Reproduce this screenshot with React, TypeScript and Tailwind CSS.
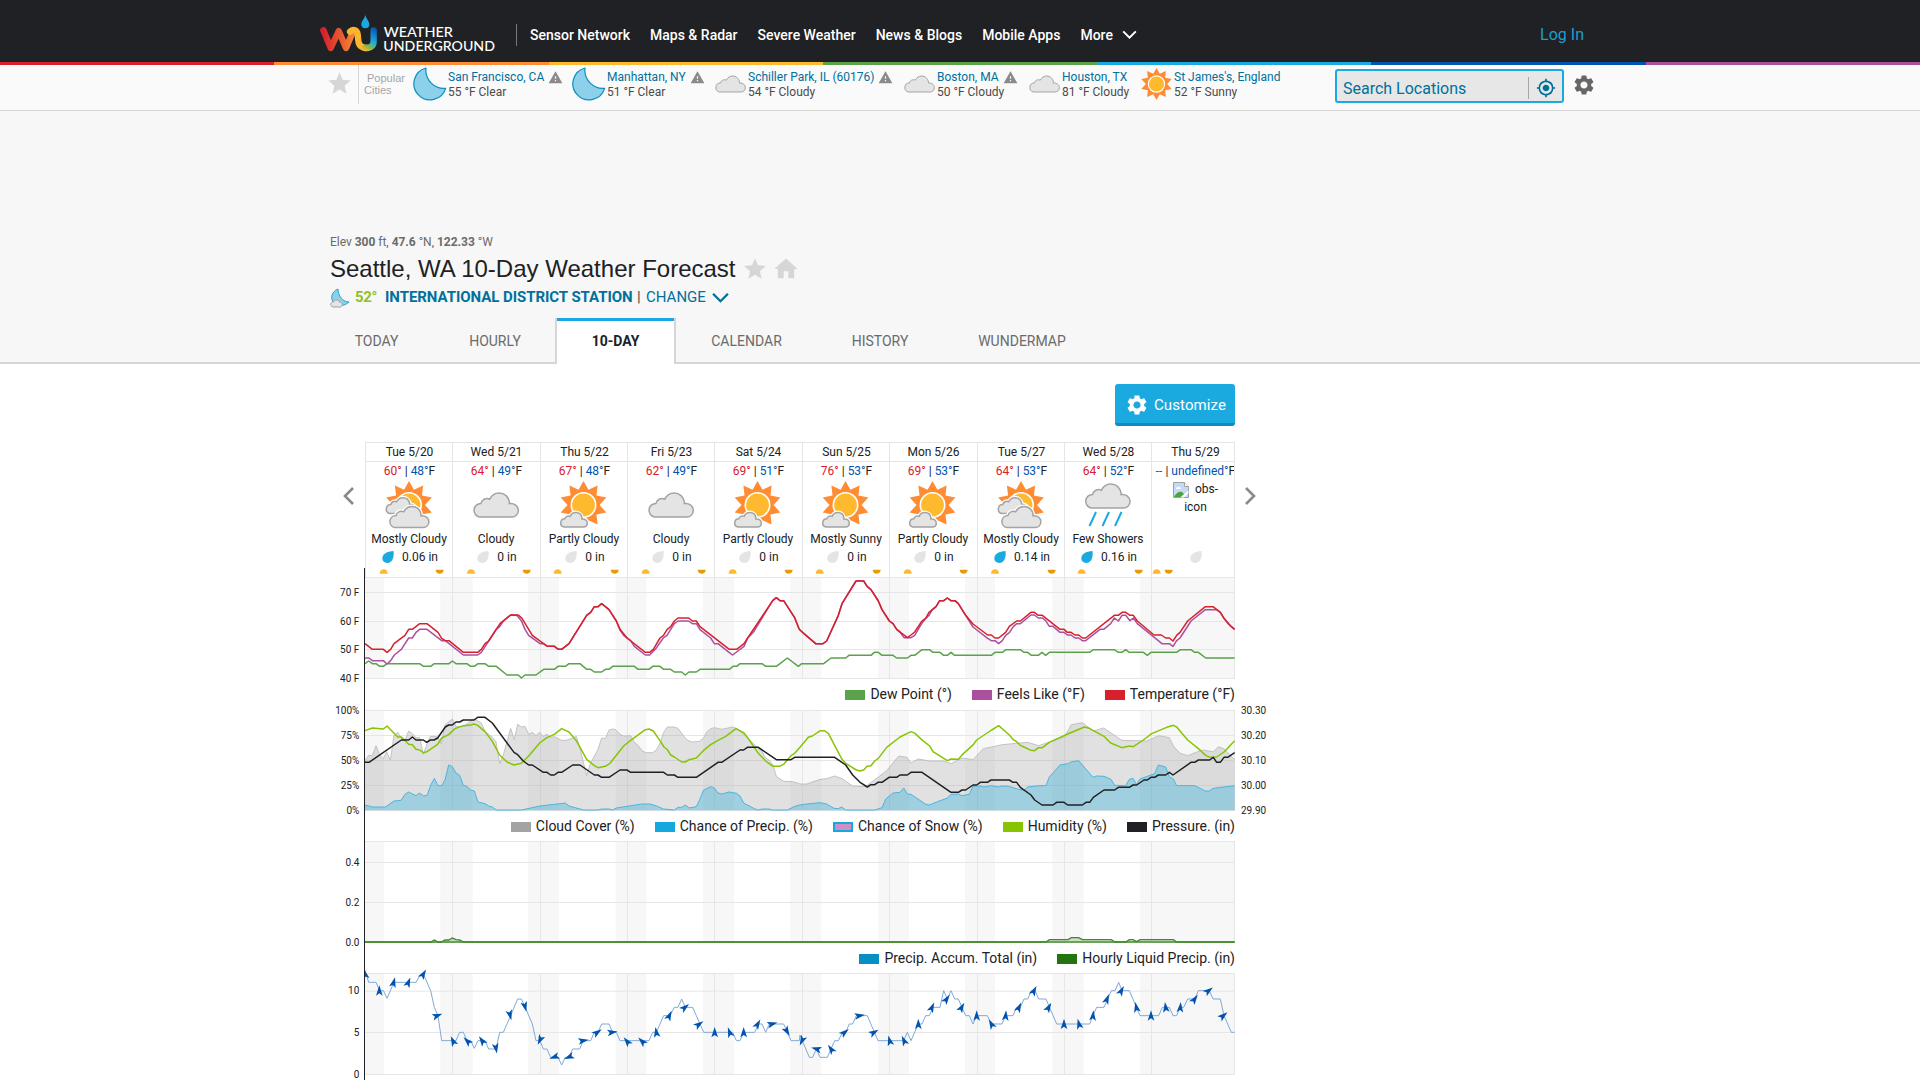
import type { ReactNode } from "react";
import { MdHome, MdMyLocation, MdSettings, MdStar, MdWarning } from "react-icons/md";

/* ---------- icons ---------- */

const CLOUD =
  "M8 25A6.9 6.9 0 0 1 9.6 11.4C10.4 7.6 14.6 5.6 18.4 7.2C20.4 3.2 24 1 27.8 1C33.2 1 37.4 4.8 38.2 10.4L38 11.6C43 11 47 14 47 18.4C47 22.4 44 25 40.4 25Z";

const STAR = Array.from({ length: 20 }, (_, i) => {
  const r = i % 2 ? 16 : 24;
  const a = (i * Math.PI) / 10;
  return `${(r * Math.sin(a)).toFixed(2)},${(-r * Math.cos(a)).toFixed(2)}`;
}).join(" ");

function SunShape({ x = 24, y = 24, s = 1 }: { x?: number; y?: number; s?: number }) {
  return (
    <g transform={`translate(${x} ${y}) scale(${s})`}>
      <polygon points={STAR} fill="#ff8b33" />
      <circle r="13" fill="#fff" />
      <circle r="11.4" fill="#ffb92f" />
    </g>
  );
}

function CloudShape({ x = 0, y = 0, s = 1, halo = false }: { x?: number; y?: number; s?: number; halo?: boolean }) {
  return (
    <g transform={`translate(${x} ${y}) scale(${s})`}>
      {halo && <path d={CLOUD} fill="#fff" stroke="#fff" strokeWidth={4 / s} />}
      <path d={CLOUD} fill="#e4e4e4" stroke="#a3a3a3" strokeWidth={1.5 / s} />
    </g>
  );
}

function MoonShape() {
  return (
    <path
      d="M13 1A16.2 16.2 0 1 0 32.6 21.3C22 22.5 11.5 13 13 1Z"
      fill="#8dd0ea"
      stroke="#0890c1"
      strokeWidth="1.2"
      strokeLinejoin="round"
    />
  );
}

type Sky = "clear" | "cloudy" | "sunny" | "partly" | "mostly" | "rain";

function SkyIcon({ sky, className }: { sky: Sky; className: string }) {
  return (
    <svg viewBox="0 0 48 48" className={`overflow-visible ${className}`}>
      {sky === "sunny" && <SunShape />}
      {sky === "cloudy" && <CloudShape x={-0.7} y={11} />}
      {sky === "partly" && (
        <>
          <SunShape x={23.5} y={24} />
          <CloudShape x={-0.9} y={31} s={0.6} halo />
        </>
      )}
      {sky === "mostly" && (
        <>
          <SunShape x={24} y={24} />
          <CloudShape x={-0.5} y={16} s={0.66} halo />
          <CloudShape x={2.5} y={24.5} s={0.88} halo />
        </>
      )}
      {sky === "rain" && (
        <>
          <CloudShape x={-1} y={2} />
          <path d="M12 31L5.500 45M25 31L18.500 45M37.500 31L31 45" stroke="#1baadf" strokeWidth="2" />
        </>
      )}
    </svg>
  );
}

function Chevron({ className }: { className: string }) {
  return (
    <svg viewBox="0 0 16 10" className={className} fill="none" stroke="currentColor" strokeWidth="2.2">
      <path d="M1 1.500L8 8.500L15 1.500" />
    </svg>
  );
}

function Side({ dir }: { dir: "left" | "right" }) {
  return (
    <svg viewBox="0 0 12 18" className="h-[18px] w-3" fill="none" stroke="#8a8a8a" strokeWidth="2.6">
      <path d={dir === "left" ? "M10 1L2 9L10 17" : "M2 1L10 9L2 17"} />
    </svg>
  );
}

function Leaf({ wet }: { wet: boolean }) {
  return (
    <svg viewBox="0 0 12 12" className="h-3 w-3">
      <path
        d="M11.500 0C12.400 6 10.500 12 5.200 12C2 12 0.300 10 0.300 7.300C0.300 3 5 0.300 11.500 0Z"
        fill={wet ? "#1baadf" : "#e4e4e4"}
      />
    </svg>
  );
}

function Logo() {
  return (
    <svg viewBox="30 42 530 116" className="h-[38.667px] w-[176.667px]">
      <defs>
        <linearGradient id="w" gradientUnits="userSpaceOnUse" x1="40" y1="0" x2="130" y2="0">
          <stop offset="0" stopColor="#d8202c" />
          <stop offset="1" stopColor="#f58434" />
        </linearGradient>
        <linearGradient id="u" gradientUnits="userSpaceOnUse" x1="192" y1="85" x2="158" y2="150">
          <stop offset="0" stopColor="#0b56b3" />
          <stop offset="0.5" stopColor="#1baadf" />
          <stop offset="0.78" stopColor="#7fb948" />
          <stop offset="1" stopColor="#ffb92f" />
        </linearGradient>
      </defs>
      <g fill="none" strokeWidth="19" strokeLinecap="round" strokeLinejoin="round">
        <path d="M40 91L62 144L86 93L108 144L128 97" stroke="url(#w)" />
        <path d="M120 95C129 85 142 90 143 104L145 122C146 138 157 144 172 144" stroke="#fdb52e" />
        <path d="M166 144C184 144 191 136 191 124L191 91" stroke="url(#u)" />
      </g>
      <path d="M166 44C168 56 178 63 178 73A12 12 0 0 1 154 73C154 63 164 56 166 44Z" fill="#1baadf" />
      <g fill="#fff" fontFamily="Lato, sans-serif" fontSize="39" fontWeight="500">
        <text x="221" y="110" textLength="208" lengthAdjust="spacingAndGlyphs">WEATHER</text>
        <text x="220" y="152.500" textLength="335" lengthAdjust="spacingAndGlyphs">UNDERGROUND</text>
      </g>
    </svg>
  );
}

/* ---------- header ---------- */

const NAV = ["Sensor Network", "Maps & Radar", "Severe Weather", "News & Blogs", "Mobile Apps"];

function Header() {
  return (
    <header>
      <div className="flex h-[62px] items-center bg-[#202124] pl-[320px]">
        <div className="mt-1 flex w-[196px]">
          <Logo />
        </div>
        <div className="mt-2 h-[22px] w-px bg-[#77787a]" />
        <nav className="mt-[7px] ml-[13px] flex flex-1 items-center gap-5 text-sm font-medium whitespace-nowrap text-white">
          {NAV.map((n) => (
            <a key={n}>{n}</a>
          ))}
          <a className="flex items-center gap-[9px]">
            More <Chevron className="h-[9px] w-[15px]" />
          </a>
        </nav>
        <a className="mt-[8px] mr-[336px] text-base text-[#1a9fd0]">Log In</a>
      </div>
      <div className="grid h-[3px] grid-cols-7">
        <i className="bg-[#d8202c]" />
        <i className="bg-[#ff8b33]" />
        <i className="bg-[#ffb92f]" />
        <i className="bg-[#5ba24a]" />
        <i className="bg-[#1baadf]" />
        <i className="bg-[#0053ae]" />
        <i className="bg-[#ab509f]" />
      </div>
    </header>
  );
}

const CITIES: { w: string; name: string; now: string; sky: Sky; warn?: boolean }[] = [
  { w: "w-[159px]", name: "San Francisco, CA", now: "55 °F Clear", sky: "clear", warn: true },
  { w: "w-[142px]", name: "Manhattan, NY", now: "51 °F Clear", sky: "clear", warn: true },
  { w: "w-[189px]", name: "Schiller Park, IL (60176)", now: "54 °F Cloudy", sky: "cloudy", warn: true },
  { w: "w-[125px]", name: "Boston, MA", now: "50 °F Cloudy", sky: "cloudy", warn: true },
  { w: "w-[112px]", name: "Houston, TX", now: "81 °F Cloudy", sky: "cloudy" },
  { w: "w-[140px]", name: "St James's, England", now: "52 °F Sunny", sky: "sunny" },
];

function CityBar() {
  return (
    <div className="flex h-[46px] border-b border-[#d6d6d6] bg-[#fafafa] pl-[326px]">
      <MdStar className="mt-[5px] h-[27px] w-[27px] text-[#d6d6d6]" />
      <div className="ml-[5px] h-[39px] w-px bg-[#d6d6d6]" />
      <div className="w-[54px] pt-[7px] pl-[5px] font-['Liberation_Sans',sans-serif] text-[11px] leading-3 text-[#a6a6a6]">
        <span className="ml-[3px]">Popular</span> Cities
      </div>
      <div className="flex w-[868px] overflow-hidden">
        {CITIES.map((c) => (
          <div key={c.name} className={`flex shrink-0 gap-px ${c.w}`}>
            {c.sky === "clear" ? (
              <svg viewBox="0 0 34 34" className="mt-0.5 h-[34px] w-[34px] shrink-0">
                <MoonShape />
              </svg>
            ) : (
              <SkyIcon sky={c.sky} className="mt-[3px] h-8 w-[33px] shrink-0" />
            )}
            <div className="pt-[5px] text-xs leading-[15px] whitespace-nowrap">
              <div className="flex items-center gap-1 text-[#00709c]">
                {c.name}
                {c.warn && <MdWarning className="h-[15px] w-[15px] text-[#8a8a8a]" />}
              </div>
              <div className="text-[#4a4a4a]">{c.now}</div>
            </div>
          </div>
        ))}
      </div>
      <div className="mt-1 ml-[54px] flex h-[34px] w-[229px] items-center rounded-[3px] border-2 border-[#1baadf] bg-[#e7e7e7] pl-1.5 text-[#00709c]">
        <span className="mt-[5px] w-[185px] text-base">Search Locations</span>
        <span className="mt-1 h-[22px] w-px bg-[#a6a6a6]" />
        <MdMyLocation className="mt-1 ml-[7px] h-5 w-5" />
      </div>
      <MdSettings className="mt-2 ml-2 h-6 w-6 text-[#666]" />
    </div>
  );
}

/* ---------- location heading ---------- */

const TABS = [
  { t: "TODAY", w: "w-[113px]" },
  { t: "HOURLY", w: "w-[122px] pl-[2px]" },
  { t: "10-DAY", w: "w-[121px]", on: true },
  { t: "CALENDAR", w: "w-[141px]" },
  { t: "HISTORY", w: "w-[126px]" },
  { t: "WUNDERMAP", w: "w-[158px]" },
];

function LocationHead() {
  return (
    <section className="h-[253px] bg-[#f7f7f7] pt-[123px]">
      <div className="pl-[330px]">
        <div className="h-4 text-xs leading-4 tracking-[-0.02px] text-[#6b6b6b]">
          Elev <b>300</b> ft, <b>47.6</b> °N, <b>122.33</b> °W
        </div>
        <div className="flex h-[38px] items-center">
          <h1 className="w-[410px] font-['Liberation_Sans',sans-serif] text-2xl whitespace-nowrap text-[#202124]">
            Seattle, WA 10-Day Weather Forecast
          </h1>
          <MdStar className="ml-0.5 h-[26px] w-[26px] text-[#d6d6d6]" />
          <MdHome className="ml-1 h-7 w-7 text-[#d6d6d6]" />
        </div>
        <div className="flex h-[18px] items-center text-[15px] text-[#00709c]">
          <svg viewBox="0 0 20 20" className="mt-0.5 h-5 w-5">
            <path d="M8 1C1 4 0 11 4 15C8 19 15 18 19 14C13 14 8 8 8 1Z" fill="#8dd0ea" stroke="#0890c1" strokeWidth="0.8" />
            <path d="M3 19C-0.500 18 0 14 3.500 14C4.500 11 9 11.500 9.500 14C13 14 13 18.500 10.500 19Z" fill="#e4e4e4" stroke="#a3a3a3" />
          </svg>
          <b className="ml-[5px] w-[30px] tracking-tight text-[#93c120]">52°</b>
          <b className="w-[247px] font-bold tracking-[-0.05px] whitespace-nowrap">INTERNATIONAL DISTRICT STATION</b>
          <span className="ml-[5px] w-[9px] text-[#444]">|</span>
          <span className="w-[66px] text-[15px]">CHANGE</span>
          <Chevron className="h-[11px] w-[17px]" />
        </div>
      </div>
      <div className="mt-3 flex h-[46px] text-sm">
        <div className="w-[320px] border-b-2 border-[#d6d6d6]" />
        {TABS.map((t) =>
          t.on ? (
            <div key={t.t} className={`flex flex-col border-x-2 border-[#d6d6d6] bg-white text-center ${t.w}`}>
              <div className="h-[3px] bg-[#1baadf]" />
              <div className="pt-[10px] leading-5 font-bold text-[#202124]">{t.t}</div>
            </div>
          ) : (
            <div key={t.t} className={`border-b-2 border-[#d6d6d6] pt-[13px] text-center leading-5 text-[#6b6b6b] ${t.w}`}>
              {t.t}
            </div>
          ),
        )}
        <div className="flex-1 border-b-2 border-[#d6d6d6]" />
      </div>
    </section>
  );
}

/* ---------- ten-day table ---------- */

const DAYS: { d: string; hi: string; lo: string; sky?: Sky; txt: string; rain?: string; w: string }[] = [
  { d: "Tue 5/20", hi: "60°", lo: "48°", sky: "mostly", txt: "Mostly Cloudy", rain: "0.06 in", w: "w-[87px]" },
  { d: "Wed 5/21", hi: "64°", lo: "49°", sky: "cloudy", txt: "Cloudy", rain: "0 in", w: "w-[88px]" },
  { d: "Thu 5/22", hi: "67°", lo: "48°", sky: "partly", txt: "Partly Cloudy", rain: "0 in", w: "w-[87px]" },
  { d: "Fri 5/23", hi: "62°", lo: "49°", sky: "cloudy", txt: "Cloudy", rain: "0 in", w: "w-[87px]" },
  { d: "Sat 5/24", hi: "69°", lo: "51°", sky: "partly", txt: "Partly Cloudy", rain: "0 in", w: "w-[88px]" },
  { d: "Sun 5/25", hi: "76°", lo: "53°", sky: "partly", txt: "Mostly Sunny", rain: "0 in", w: "w-[87px]" },
  { d: "Mon 5/26", hi: "69°", lo: "53°", sky: "partly", txt: "Partly Cloudy", rain: "0 in", w: "w-[88px]" },
  { d: "Tue 5/27", hi: "64°", lo: "53°", sky: "mostly", txt: "Mostly Cloudy", rain: "0.14 in", w: "w-[87px]" },
  { d: "Wed 5/28", hi: "64°", lo: "52°", sky: "rain", txt: "Few Showers", rain: "0.16 in", w: "w-[87px]" },
  { d: "Thu 5/29", hi: "--", lo: "undefined°", txt: "", w: "w-[84px] border-r" },
];

function BrokenImage() {
  return (
    <svg viewBox="0 0 16 16" className="inline h-4 w-4">
      <path d="M0.500 0.500H11.500L15.500 4.500V15.500H0.500Z" fill="#c6d9f5" stroke="#a0a0a0" />
      <path d="M11.500 0.500V4.500H15.500" fill="#fff" stroke="#a0a0a0" />
      <path d="M3 7Q3 5 5 5Q7 4 8 7Z" fill="#fff" />
      <path d="M1 15C3 11 6 9 9 10L11 12L8 15Z" fill="#4aa63c" />
      <path d="M7.500 15.500L15.500 8.500V11L11 15.500Z" fill="#fff" />
    </svg>
  );
}

function Forecast() {
  return (
    <div className="flex h-[123px] text-center text-xs text-[#202124]">
      <div className="flex w-[45px] items-center pb-[15px] pl-[23px]">
        <Side dir="left" />
      </div>
      {DAYS.map((c) => (
        <div key={c.d} className={`overflow-hidden border-t border-l border-[#e4e4e4] whitespace-nowrap ${c.w}`}>
          <div className="flex min-w-[87px] flex-col items-center">
            <div className="h-[19px] w-full border-b border-[#e4e4e4] leading-[18px]">{c.d}</div>
            <div className="h-[18px] leading-[18px]">
              <span className="text-[#d8202c]">{c.hi}</span> | <span className="text-[#0053ae]">{c.lo}</span>F
            </div>
            {c.sky ? (
              <SkyIcon sky={c.sky} className="mt-px mr-px h-12 w-12" />
            ) : (
              <div className="h-[49px] w-[60px] leading-[18px] whitespace-normal">
                <BrokenImage /> &nbsp;obs-
                <br />
                icon
              </div>
            )}
            <div className="h-[18px] pr-px leading-[20px]">{c.txt}</div>
            <div className="flex h-[18px] items-center gap-2 pt-0.5 pl-px">
              <Leaf wet={!!c.rain && c.rain !== "0 in"} />
              {c.rain && <span>{c.rain}</span>}
            </div>
          </div>
        </div>
      ))}
      <div className="flex flex-1 items-center pb-[15px] pl-[9px]">
        <Side dir="right" />
      </div>
    </div>
  );
}

/* ---------- charts ---------- */

// Chart space is three units per pixel; the second half of each series starts at x = 1440.
const HALF = 1440;

function series(left: string, right: string) {
  const shifted = right
    .trim()
    .split(/\s+/)
    .map((p) => {
      const [x, y] = p.split(",");
      return `${Number(x) + HALF},${y}`;
    })
    .join(" ");
  return `${left.trim()} ${shifted}`;
}

const TEMP = series(
  "135,236 157,253 190,253 201,262 212,253 222,236 255,211 266,193 277,193 299,176 321,176 354,202 365,220 376,227 387,227 430,262 473,262 484,253 495,236 506,228 540,176 572,150 595,150 606,160 637,211 682,244 703,244 715,253 725,253 747,236 800,151 812,142 823,125 834,125 845,116 856,125 867,134 889,168 900,193 921,219 976,262 989,262 1000,253 1020,219 1030,212 1041,194 1052,185 1063,168 1074,159 1106,159 1117,168 1129,168 1140,185 1228,253 1250,253 1272,236 1283,219 1358,107 1369,98 1380,107 1391,107 1402,124 1424,158 1437,191",
  "0,195 12,206 47,236 69,236 80,228 115,151 126,116 168,48 191,48 202,65 213,74 235,108 246,134 268,168 279,176 290,193 322,218 333,210 344,201 365,169 377,160 387,142 408,125 419,107 431,107 442,99 453,107 465,107 475,116 497,151 519,177 563,210 574,210 585,219 596,219 617,202 628,184 650,168 661,168 693,142 703,142 715,151 727,151 780,193 792,193 802,202 813,202 825,210 836,210 847,219 857,219 943,151 955,151 966,142 977,142 990,151 1000,151 1012,168 1062,210 1084,210 1097,219 1108,219 1119,228 1130,211 1140,202 1163,168 1216,125 1239,125 1261,142 1272,160 1294,185 1304,193",
);
const FEELS = series(
  "135,279 147,279 157,287 190,287 201,297 212,287 223,270 244,253 266,219 277,219 288,202 299,193 321,193 365,227 376,227 430,270 473,270 484,262 495,245 506,228 528,194 539,185 550,168 572,150 590,151 604,167 615,193 626,211 660,236 671,236 682,244 703,244 715,253 725,253 747,236 800,151 812,142 823,125 834,125 845,116 856,125 867,134 889,168 900,195 911,211 932,227 943,244 976,270 989,270 1006,253 1030,219 1041,211 1063,176 1074,168 1106,168 1117,176 1129,176 1140,194 1172,219 1183,236 1194,236 1227,262 1238,270 1272,244 1283,219 1300,202 1358,107 1369,98 1380,107 1391,107 1402,124 1424,158 1437,191",
  "0,195 12,206 47,236 69,236 80,228 115,151 126,116 168,48 191,48 202,65 213,74 235,108 246,134 268,168 279,176 290,193 301,203 312,218 333,218 344,211 365,176 377,160 387,151 397,134 408,125 419,107 431,107 442,99 453,107 465,107 475,116 497,151 519,186 563,220 574,227 585,227 596,236 607,227 617,211 628,203 640,185 650,176 661,176 693,150 703,150 715,159 727,159 737,167 748,184 759,184 780,202 792,202 802,210 813,210 825,219 836,219 847,227 857,227 900,193 911,193 932,176 943,159 955,168 966,151 977,151 990,167 1000,159 1012,176 1086,236 1108,236 1119,244 1130,227 1140,219 1173,168 1216,134 1250,134 1261,142 1272,160 1285,177 1304,193",
);
const DEW = series(
  "135,296 146,288 157,296 168,296 179,304 190,304 201,296 299,296 310,304 332,304 343,296 387,296 397,288 408,296 441,296 452,304 463,304 474,296 495,296 506,304 529,304 561,330 595,330 604,339 615,330 648,330 671,313 703,313 714,304 736,304 747,296 780,296 800,313 812,313 823,321 845,321 856,313 867,313 878,304 943,304 954,313 987,313 998,304 1020,304 1031,313 1052,313 1063,321 1085,321 1096,330 1107,321 1129,321 1140,313 1228,313 1239,304 1250,304 1260,296 1326,296 1337,304 1369,304 1380,296 1402,279 1435,304",
  "5,296 71,296 93,279 137,279 147,271 213,271 223,262 235,262 246,271 279,271 290,279 322,279 333,271 344,271 366,254 388,254 399,262 420,262 431,271 442,271 453,262 464,271 574,271 585,262 607,262 618,254 661,254 672,262 683,262 694,271 715,271 726,262 737,271 748,262 869,262 880,254 943,254 955,262 966,262 977,254 988,262 1030,262 1042,271 1053,262 1130,262 1141,254 1173,254 1184,262 1195,262 1217,279 1304,279",
);
const CLOUDS = series(
  "135,586 146,571 157,572 168,542 179,570 190,581 200,560 211,586 222,512 233,502 244,520 255,526 266,498 277,506 288,518 299,518 310,568 320,540 331,514 342,514 353,516 364,536 375,480 397,462 408,485 430,485 462,462 484,474 495,499 517,517 528,530 539,596 550,570 572,490 583,524 593,478 604,486 615,484 626,508 637,502 648,512 659,502 670,514 681,508 692,517 703,515 725,526 740,526 769,514 780,550 800,632 811,596 834,553 845,519 856,521 867,495 878,492 887,494 900,508 911,513 932,512 943,532 954,541 965,556 976,563 998,563 1009,555 1020,535 1031,502 1042,486 1063,486 1074,490 1096,520 1107,528 1118,531 1138,529 1150,520 1161,500 1172,491 1183,488 1205,493 1238,486 1250,490 1272,508 1294,530 1326,560 1337,580 1348,586 1359,600 1369,634 1391,649 1418,650 1438,656",
  "0,657 20,657 60,643 80,641 104,633 126,641 158,663 190,665 203,660 235,636 260,617 296,573 321,577 333,594 355,582 389,588 431,588 453,596 486,579 519,584 550,551 607,539 660,534 683,532 716,542 760,527 794,516 814,479 847,473 880,498 911,489 965,526 1040,528 1077,512 1108,518 1120,543 1140,565 1163,572 1206,555 1240,560 1255,545 1273,552 1304,584",
);
const HUMID = series(
  "135,497 157,489 190,492 201,483 233,516 244,516 266,538 277,539 288,553 299,555 310,563 321,560 353,538 365,519 386,509 405,491 430,482 452,480 462,477 473,481 495,500 517,529 539,570 561,591 582,600 604,595 626,573 659,534 681,518 703,508 725,491 747,501 769,527 800,583 823,602 834,608 856,604 870,595 911,543 932,526 976,494 987,492 1000,498 1020,527 1032,546 1042,554 1052,570 1063,576 1085,591 1096,591 1107,584 1129,579 1150,557 1172,539 1194,526 1216,515 1248,491 1272,504 1283,518 1315,565 1337,588 1359,604 1378,604 1391,598 1413,572 1424,565 1438,549",
  "0,547 25,517 37,513 61,497 73,497 85,505 126,583 137,595 169,615 180,618 192,614 201,604 213,602 224,588 235,580 260,547 300,516 333,500 345,505 364,523 389,543 399,560 442,587 453,582 475,583 487,569 520,539 530,525 575,495 596,482 628,510 640,524 650,530 661,541 672,546 693,556 704,557 715,548 727,548 748,532 803,507 853,486 868,490 912,514 932,534 966,548 988,543 1000,545 1030,525 1055,506 1100,487 1120,481 1130,486 1163,525 1195,551 1217,571 1230,577 1250,576 1272,561 1304,527",
);
const PRESSURE = series(
  "135,592 147,592 244,525 266,525 277,516 288,525 310,525 320,532 331,525 342,525 353,519 376,486 386,480 397,480 408,471 419,471 430,465 462,465 473,457 495,457 517,474 582,562 593,569 610,588 626,600 637,600 670,622 681,622 692,630 703,630 714,622 725,622 758,600 780,600 823,630 834,630 845,637 867,637 900,615 921,615 932,622 1031,622 1042,630 1063,630 1074,637 1129,637 1194,592 1205,592 1260,555 1271,555 1282,547 1315,547 1369,584 1413,584 1424,577 1438,577",
  "0,577 104,577 137,600 158,630 180,652 202,666 213,659 224,659 234,652 246,652 267,637 290,637 300,630 322,630 333,622 366,622 453,682 475,682 486,675 497,675 519,660 530,660 541,652 562,652 573,645 628,645 639,652 650,652 661,667 693,690 704,705 726,720 759,720 770,712 792,712 803,720 847,720 858,712 869,712 880,697 912,675 944,675 955,667 988,667 999,660 1010,660 1032,645 1042,645 1053,637 1064,637 1075,630 1097,630 1108,622 1119,630 1173,592 1184,592 1195,585 1229,585 1240,577 1250,592 1261,592 1272,577 1283,577 1304,563",
);
const PRECIP = series(
  "135,720 157,726 196,726 222,708 243,706 255,688 266,681 288,692 298,684 310,692 321,692 332,661 343,640 354,662 365,662 375,645 386,600 397,605 408,624 419,631 430,661 441,664 452,675 463,678 474,711 495,716 506,723 517,726 529,735 604,735 660,723 703,718 736,714 747,723 780,732 790,735 834,735 845,732 867,732 878,735 889,729 965,717 990,717 1010,723 1030,732 1063,735 1074,727 1085,727 1096,720 1107,729 1129,725 1140,702 1150,676 1172,665 1183,669 1194,684 1205,687 1227,681 1250,685 1260,693 1271,714 1305,732 1315,735 1326,732 1347,732 1358,735 1402,735 1420,726 1438,720",
  "0,720 20,717 60,713 80,717 102,730 115,731 125,726 137,735 225,735 246,728 257,702 279,684 300,682 311,669 322,687 333,688 376,717 388,720 410,711 442,699 453,688 475,687 486,692 508,688 519,663 541,663 552,666 574,662 595,666 605,663 625,664 660,674 672,675 683,666 716,662 738,662 748,636 780,600 805,596 815,590 836,587 847,600 879,637 890,633 912,634 933,643 944,661 977,662 988,643 999,640 1009,658 1020,642 1064,626 1075,600 1086,603 1097,606 1108,635 1120,642 1130,662 1184,662 1216,678 1228,678 1239,670 1304,662",
);
const LIQUID = series(
  "135,381 332,381 343,375 354,381 364,381 375,375 386,375 397,369 408,374 419,375 430,381",
  "738,381 748,374 804,374 814,368 836,368 847,374 934,374 945,381 977,381 988,374 999,374 1010,380 1020,374 1120,374 1130,381 1304,381",
);
const WIND = series(
  "135,465 146,502 168,502 179,527 190,527 201,550 222,502 288,502 299,483 310,477 332,527 343,577 354,602 365,677 408,677 419,652 430,652 441,677 452,677 463,700 474,677 495,677 506,702 528,702 539,652 550,652 572,602 593,552 604,552 615,575 637,627 648,677 660,677 670,702 681,702 692,727 714,727 725,750 736,727 747,727 758,702 779,702 790,677 812,677 823,652 834,652 845,627 867,627 878,652 889,652 900,677 987,677 998,652 1009,652 1031,602 1050,602 1063,577 1074,577 1085,552 1096,577 1118,577 1129,602 1140,627 1151,652 1238,652 1249,677 1260,677 1271,652 1304,652 1315,627 1326,627 1337,652 1348,627 1391,627 1402,652 1413,677 1438,677",
  "0,660 7,677 28,727 38,727 49,702 60,727 82,727 93,702 104,677 115,677 126,655 137,652 148,627 158,627 169,602 202,602 234,677 311,677 322,652 333,677 355,627 366,627 377,602 388,602 399,577 420,577 431,527 442,552 453,527 464,552 475,552 486,577 497,602 508,602 519,627 530,602 562,602 573,627 606,627 617,602 639,602 650,577 661,577 672,552 683,552 694,527 705,527 716,552 738,552 770,627 869,627 879,602 890,577 912,577 923,552 934,527 945,527 956,502 966,527 988,527 1020,602 1076,602 1087,577 1108,577 1119,602 1130,602 1140,577 1151,577 1163,552 1184,552 1195,527 1228,527 1239,552 1261,552 1272,602 1294,652 1304,652",
);

// x, y, heading in degrees
const ARROWS: [number, number, number][] = [
  [135, 477, -15], [178, 527, 0], [221, 502, 15], [265, 502, 22], [310, 477, 32], [352, 602, 70], [399, 678, -25],
  [442, 678, -45], [486, 677, -35], [528, 700, 170], [570, 600, 165], [615, 575, 165], [660, 675, 205], [703, 726, 250],
  [747, 726, 248], [790, 677, 80], [832, 652, 55], [877, 652, 82], [921, 679, -38], [966, 679, -45], [1009, 652, -10],
  [1048, 602, 25], [1095, 577, 50], [1137, 628, 55], [1184, 652, 0], [1229, 652, -20], [1271, 652, 0], [1313, 627, 30],
  [1357, 627, 75], [1401, 649, 150],
  [1446, 677, 205], [1489, 702, -75], [1533, 702, -35], [1574, 652, 50], [1619, 602, 80], [1662, 652, 60],
  [1709, 677, -15], [1752, 677, -25], [1795, 627, 0], [1836, 577, 25], [1880, 552, 35], [1925, 577, 30], [1970, 602, 0],
  [2014, 627, -28], [2057, 602, 5], [2097, 577, 25], [2142, 527, 28], [2186, 577, 30], [2232, 627, 0], [2277, 627, -15],
  [2319, 602, 5], [2361, 552, 22], [2404, 527, 28], [2449, 577, -12], [2493, 602, 0], [2537, 577, -8], [2581, 577, 5],
  [2624, 552, 35], [2666, 527, 52], [2710, 602, 50],
];

const NIGHTS = [
  [135, 192], [361, 458], [624, 717], [887, 979], [1149, 1242], [1411, 1504], [1674, 1767], [1935, 2025], [2197, 2291],
  [2460, 2743],
];
const COLS = [396, 660, 921, 1182, 1446, 1707, 1971, 2232, 2493, 2742];
const RISES = [191, 453, 713, 977, 1238, 1499, 1763, 2025, 2285, 2510];
const SETS = [359, 620, 884, 1145, 1406, 1670, 1931, 2195, 2456, 2546];

type Label = { y: number; t: string };

function Chart({
  from,
  to,
  top,
  bottom,
  rows,
  left,
  right = [],
  size,
  axisTop,
  children,
}: {
  from: number;
  to: number;
  top: number;
  bottom: number;
  rows: number[];
  left: Label[];
  right?: Label[];
  size: string;
  axisTop?: number;
  children: ReactNode;
}) {
  return (
    <svg viewBox={`0 ${from} 2880 ${to - from}`} className={`block w-[960px] overflow-visible ${size}`}>
      {NIGHTS.map(([a, b]) => (
        <rect key={a} x={a} y={top} width={b - a} height={bottom - top} fill="#f7f7f7" />
      ))}
      <g fill="#e6e6e6">
        {COLS.map((x) => (
          <rect key={x} x={x} y={top} width="3" height={bottom - top} />
        ))}
        {rows.map((y) => (
          <rect key={y} x="135" y={y} width="2610" height="3" />
        ))}
      </g>
      {children}
      <rect x="132" y={axisTop ?? from} width="3" height={to - (axisTop ?? from)} fill="#202124" />
      <g fontSize="30" fill="#202124" fontFamily="Roboto, sans-serif">
        {left.map((l) => (
          <text key={l.t} x="118" y={l.y + 11} textAnchor="end">{l.t}</text>
        ))}
        {right.map((l) => (
          <text key={l.t} x="2763" y={l.y + 11}>{l.t}</text>
        ))}
      </g>
    </svg>
  );
}

function Legend({ items, className }: { items: { c: string; t: string }[]; className: string }) {
  return (
    <div
      className={`ml-11 flex w-[871px] items-center justify-end gap-5 border-l border-[#202124] text-sm whitespace-nowrap text-[#202124] ${className}`}
    >
      {items.map((i) => (
        <div key={i.t} className="flex items-center gap-[5px]">
          <span className={`mt-0.5 h-2.5 w-5 ${i.c}`} />
          {i.t}
        </div>
      ))}
    </div>
  );
}

function Charts() {
  return (
    <div>
      <Chart
        from={0}
        to={354}
        top={38}
        bottom={341}
        rows={[36, 81, 168, 252, 339]}
        left={[{ y: 82, t: "70 F" }, { y: 168, t: "60 F" }, { y: 254, t: "50 F" }, { y: 340, t: "40 F" }]}
        size="h-[118px]"
        axisTop={9}
      >
        {[135, ...COLS].map((x) => (
          <rect key={x} x={x} y="0" width="3" height="38" fill="#e4e4e4" />
        ))}
        {RISES.map((x) => (
          <path key={x} d={`M${x - 12} 26C${x - 12} 17 ${x - 6} 13 ${x} 13S${x + 12} 17 ${x + 12} 26Z`} fill="#ffb92f" />
        ))}
        {SETS.map((x) => (
          <path key={x} d={`M${x - 12} 14C${x - 12} 22 ${x - 6} 26 ${x} 26S${x + 12} 22 ${x + 12} 14Z`} fill="#e59c06" />
        ))}
        <g fill="none" strokeWidth="4.5" strokeLinejoin="round">
          <polyline points={DEW} stroke="#5ba24a" />
          <polyline points={FEELS} stroke="#ab509f" />
          <polyline points={TEMP} stroke="#d8202c" />
        </g>
      </Chart>
      <Legend
        className="h-[23px] pb-0.5"
        items={[
          { c: "bg-[#5ba24a]", t: "Dew Point (°)" },
          { c: "bg-[#ab509f]", t: "Feels Like (°F)" },
          { c: "bg-[#d8202c]", t: "Temperature (°F)" },
        ]}
      />
      <Chart
        from={423}
        to={750}
        top={435}
        bottom={738}
        rows={[435, 510, 585, 660, 735]}
        left={[
          { y: 436, t: "100%" },
          { y: 511, t: "75%" },
          { y: 585, t: "50%" },
          { y: 661, t: "25%" },
          { y: 736, t: "0%" },
        ]}
        right={[
          { y: 436, t: "30.30" },
          { y: 511, t: "30.20" },
          { y: 585, t: "30.10" },
          { y: 661, t: "30.00" },
          { y: 736, t: "29.90" },
        ]}
        size="h-[109px]"
      >
        <polygon points={`${CLOUDS} 2744,736 135,736`} fill="#a3a3a3" fillOpacity="0.33" />
        <polyline points={CLOUDS} fill="none" stroke="#b9b9b9" strokeWidth="2.500" />
        <polygon points={`${PRECIP} 2744,736 135,736`} fill="#1baadf" fillOpacity="0.33" />
        <g fill="none" strokeLinejoin="round">
          <polyline points={PRECIP} stroke="#4cb5dc" strokeWidth="3" />
          <polyline points={HUMID} stroke="#87c404" strokeWidth="4.5" />
          <polyline points={PRESSURE} stroke="#202124" strokeWidth="4.5" />
        </g>
      </Chart>
      <Legend
        className="h-[22px]"
        items={[
          { c: "bg-[#a3a3a3]", t: "Cloud Cover (%)" },
          { c: "bg-[#14a8de]", t: "Chance of Precip. (%)" },
          { c: "border-2 border-[#14a8de] bg-[#cd8fc5]", t: "Chance of Snow (%)" },
          { c: "bg-[#87c404]", t: "Humidity (%)" },
          { c: "bg-[#202124]", t: "Pressure. (in)" },
        ]}
      />
      <Chart
        from={66}
        to={399}
        top={80}
        bottom={382}
        rows={[78, 141, 261, 380]}
        left={[{ y: 142, t: "0.4" }, { y: 262, t: "0.2" }, { y: 382, t: "0.0" }]}
        size="h-[111px]"
      >
        <polygon points={`${LIQUID} 2744,383 135,383`} fill="#22740f" fillOpacity="0.2" />
        <polyline points="135,381 2744,381" stroke="#4b9136" strokeWidth="5" />
        <polyline points={LIQUID} fill="none" stroke="#3f8a2b" strokeWidth="4" />
      </Chart>
      <Legend
        className="h-[21px] pb-0.5"
        items={[
          { c: "bg-[#058fc2]", t: "Precip. Accum. Total (in)" },
          { c: "bg-[#22740f]", t: "Hourly Liquid Precip. (in)" },
        ]}
      />
      <Chart
        from={462}
        to={795}
        top={476}
        bottom={780}
        rows={[474, 527, 651, 777]}
        left={[{ y: 527, t: "10" }, { y: 652, t: "5" }, { y: 778, t: "0" }]}
        size="h-[111px]"
      >
        <clipPath id="plot">
          <rect x="135" y="440" width="2610" height="355" />
        </clipPath>
        <polyline points={WIND} fill="none" stroke="#7fa9d8" strokeWidth="3" />
        <g fill="#0053ae" clipPath="url(#plot)">
          {ARROWS.map(([x, y, a]) => (
            <path key={x} d="M0 -16L10 15L0 8L-10 15Z" transform={`translate(${x} ${y}) rotate(${a})`} />
          ))}
        </g>
      </Chart>
    </div>
  );
}

export default function App() {
  return (
    <div className="h-[1080px] w-[1920px] overflow-hidden bg-white font-[Roboto,sans-serif]">
      <Header />
      <CityBar />
      <LocationHead />
      <main className="ml-[320px] w-[960px] pt-5">
        <div className="flex h-[58px] justify-end pr-[45px]">
          <button className="flex h-[42px] w-[120px] items-center gap-[5px] rounded-[3px] border-b-3 border-[#0590c0] bg-[#1baadf] pt-[3px] pl-[10px] text-[15px] tracking-[0.1px] text-white">
            <MdSettings className="h-6 w-6" />
            Customize
          </button>
        </div>
        <Forecast />
        <Charts />
      </main>
    </div>
  );
}
